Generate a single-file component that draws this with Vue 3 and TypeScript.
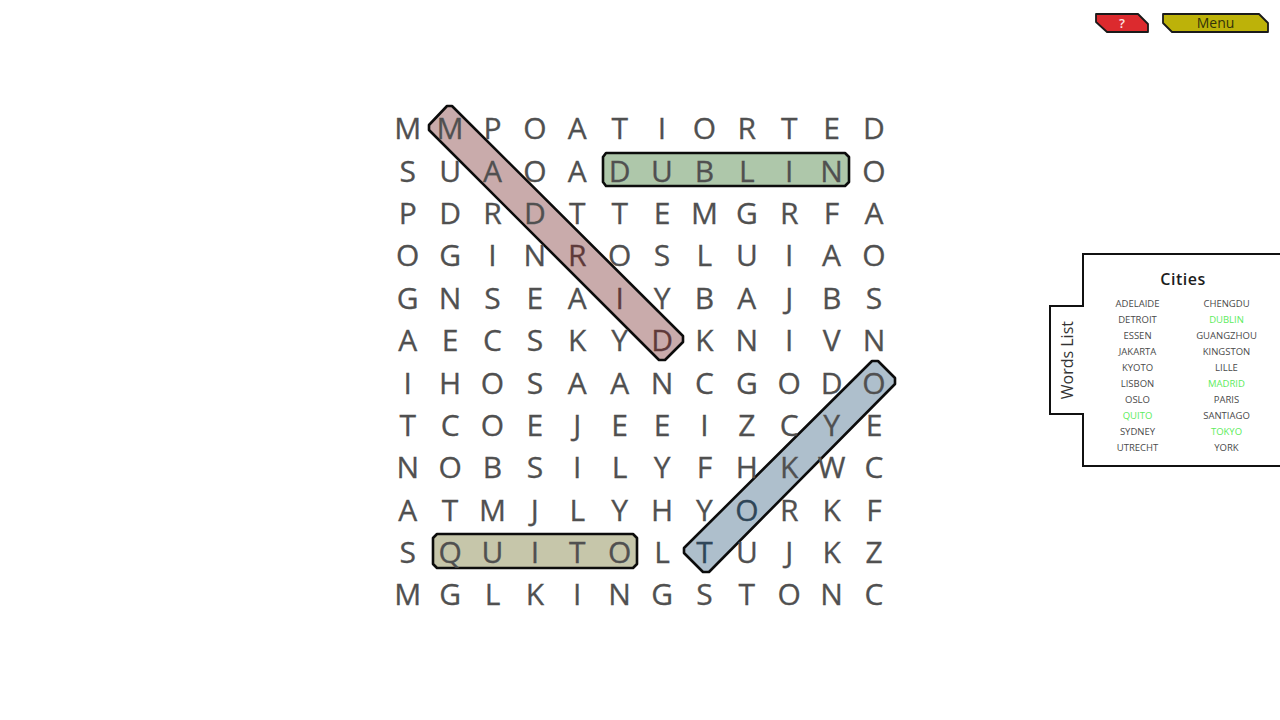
<script setup lang="ts">
interface Mark { name: string; points: string; fill: string }

const rows: string[] = [
  'MMPOATIORTED',
  'SUAOADUBLINO',
  'PDRDTTEMGRFA',
  'OGINROSLUIAO',
  'GNSEAIYBAJBS',
  'AECSKYDKNIVN',
  'IHOSAANCGODO',
  'TCOEJEEIZCYE',
  'NOBSILYFHKWC',
  'ATMJLYHYORKF',
  'SQUITOLTUJKZ',
  'MGLKINGSTONC',
]

// Overlay coordinates are relative to the board's top-left corner (386, 107).
const shift = (pts: number[][]): string =>
  pts.map(([x, y]) => `${x - 386},${y - 107}`).join(' ')

const marks: Mark[] = [
  {
    name: 'madrid',
    fill: '#c9abab',
    points: shift([[447, 106], [452, 106], [683, 336], [683, 342], [665, 360], [659, 360], [429, 130], [429, 125]]),
  },
  {
    name: 'dublin',
    fill: '#aec7aa',
    points: shift([[606, 153], [845, 153], [849, 157], [849, 182], [845, 186], [606, 186], [603, 182], [603, 157]]),
  },
  {
    name: 'tokyo',
    fill: '#aebfcc',
    points: shift([[872, 361], [878, 361], [895, 378], [895, 384], [709, 572], [703, 572], [684, 553], [684, 548]]),
  },
  {
    name: 'quito',
    fill: '#c6c6aa',
    points: shift([[437, 534], [633, 534], [637, 538], [637, 564], [633, 568], [437, 568], [433, 564], [433, 538]]),
  },
]

const tinted: Record<string, string> = {
  '3-4': 'red',
  '4-5': 'red',
  '5-6': 'red',
  '9-8': 'blue',
  '10-7': 'blue',
}

interface Word { label: string; found: boolean }
const words: Word[] = [
  { label: 'ADELAIDE', found: false },
  { label: 'CHENGDU', found: false },
  { label: 'DETROIT', found: false },
  { label: 'DUBLIN', found: true },
  { label: 'ESSEN', found: false },
  { label: 'GUANGZHOU', found: false },
  { label: 'JAKARTA', found: false },
  { label: 'KINGSTON', found: false },
  { label: 'KYOTO', found: false },
  { label: 'LILLE', found: false },
  { label: 'LISBON', found: false },
  { label: 'MADRID', found: true },
  { label: 'OSLO', found: false },
  { label: 'PARIS', found: false },
  { label: 'QUITO', found: true },
  { label: 'SANTIAGO', found: false },
  { label: 'SYDNEY', found: false },
  { label: 'TOKYO', found: true },
  { label: 'UTRECHT', found: false },
  { label: 'YORK', found: false },
]
</script>

<template>
  <div class="page">
    <header class="topbar">
      <button class="tag tag-help" type="button">
        <svg class="tag-shape" viewBox="0 0 54 20" aria-hidden="true">
          <polygon points="1,1 43,1 53,11 53,19 12,19 1,9" />
        </svg>
        <span class="tag-label">?</span>
      </button>
      <button class="tag tag-menu" type="button">
        <svg class="tag-shape" viewBox="0 0 107 20" aria-hidden="true">
          <polygon points="1,1 97,1 106,10 106,19 10,19 1,10" />
        </svg>
        <span class="tag-label">Menu</span>
      </button>
    </header>

    <main class="board">
      <svg class="marks" viewBox="0 0 509 509" aria-hidden="true">
        <polygon
          v-for="m in marks"
          :key="m.name"
          :points="m.points"
          :fill="m.fill"
        />
      </svg>
      <div class="grid">
        <template v-for="(row, r) in rows" :key="r">
          <span
            v-for="(ch, c) in row.split('')"
            :key="c"
            class="cell"
            :class="tinted[`${r}-${c}`]"
          >{{ ch }}</span>
        </template>
      </div>
    </main>

    <aside class="drawer">
      <div class="tab"><span class="tab-text">Words List</span></div>
      <div class="panel">
        <h2 class="title">Cities</h2>
        <ul class="words">
          <li v-for="w in words" :key="w.label" :class="{ found: w.found }">{{ w.label }}</li>
        </ul>
      </div>
    </aside>
  </div>
</template>

<style scoped>
.page {
  position: relative;
  width: 1280px;
  height: 720px;
  overflow: hidden;
  background: #fff;
  font-family: "Open Sans", "Noto Sans", sans-serif;
}

.topbar {
  display: flex;
  justify-content: flex-end;
  gap: 13px;
  height: 33px;
  padding: 13px 11px 0 0;
}

.tag {
  position: relative;
  height: 20px;
  padding: 0;
  border: 0;
  background: none;
  font-family: inherit;
}

.tag-help { width: 54px; color: #fbe3e3; font-size: 13px; font-weight: 600; }
.tag-menu { width: 107px; color: #33330a; font-size: 14px; }

.tag-shape {
  position: absolute;
  inset: 0;
  width: 100%;
  height: 100%;
}

.tag-shape polygon {
  stroke: #1a1a1a;
  stroke-width: 1.8;
  stroke-linejoin: round;
}

.tag-help polygon { fill: #dc2a2e; }
.tag-menu polygon { fill: #bdb209; }

.tag-label {
  position: relative;
  display: block;
  line-height: 20px;
}

.board {
  position: relative;
  width: 509px;
  height: 509px;
  margin: 61px 0 0 386px;
}

.marks {
  position: absolute;
  inset: 0;
  width: 100%;
  height: 100%;
  overflow: visible;
}

.marks polygon {
  stroke: #0c0c0c;
  stroke-width: 2.6;
  stroke-linejoin: round;
}

.grid {
  position: relative;
  display: grid;
  grid-template-columns: repeat(12, 42.4px);
  grid-template-rows: repeat(12, 42.4px);
}

.cell {
  box-sizing: border-box;
  display: flex;
  align-items: center;
  justify-content: center;
  padding: 0 0 0 1px;
  font-size: 30px;
  font-weight: 500;
  line-height: 1;
  color: #505050;
  -webkit-text-stroke: 0.3px currentColor;
}

.cell.red { color: #5e3a3a; }
.cell.blue { color: #2f4658; }

.drawer {
  position: absolute;
  top: 253px;
  right: -2px;
  display: flex;
  align-items: center;
}

.tab {
  box-sizing: border-box;
  display: flex;
  align-items: center;
  justify-content: center;
  width: 35px;
  height: 110px;
  margin-right: -2px;
  padding-right: 2px;
  position: relative;
  z-index: 1;
  border: 2px solid #111;
  border-right: 0;
  background: #fff;
}

.tab-text {
  writing-mode: vertical-rl;
  transform: rotate(180deg);
  font-size: 16px;
  color: #333;
  white-space: nowrap;
}

.panel {
  box-sizing: border-box;
  width: 200px;
  height: 214px;
  padding: 12px 0 0;
  border: 2px solid #111;
}

.title {
  margin: 0 0 5px;
  width: 198px;
  text-align: center;
  font-size: 16px;
  font-weight: 600;
  letter-spacing: 0.5px;
  line-height: 24px;
  color: #1d1d1d;
}

.words {
  display: grid;
  grid-template-columns: 89px 89px;
  justify-content: start;
  margin: 0;
  padding: 0 0 0 9px;
  list-style: none;
  font-size: 9.5px;
  line-height: 16px;
  text-align: center;
  color: #4a4a4a;
}

.words .found { color: #5cec5c; }
</style>
